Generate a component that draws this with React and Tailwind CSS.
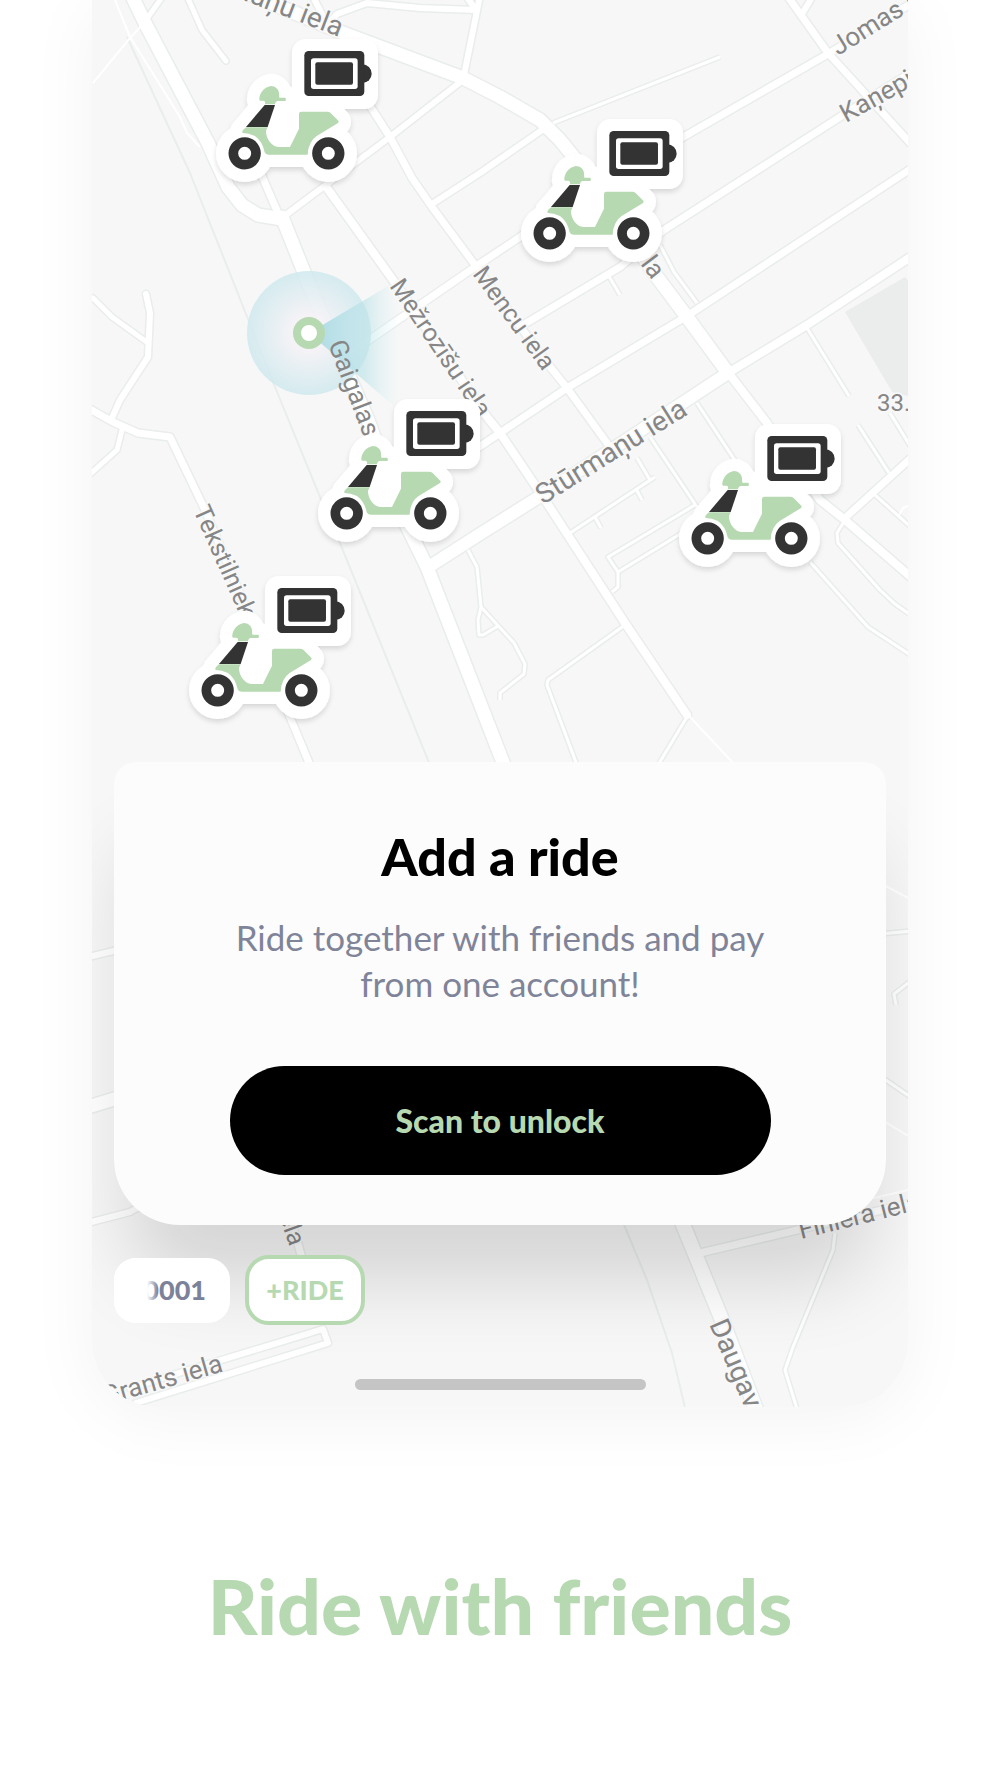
import React from 'react';

const ROADS = [
  { d: 'M93 298 L112 317 L148 343', w: 5 },
  { d: 'M146 294 L150 313 L148 357 L120 400 L112 418', w: 6 },
  { d: 'M122 430 L117 450 L88 476', w: 5 },
  { d: 'M88 408 L113 422 L138 433 L170 437 L205 510 L255 630 L290 717 L312 770', w: 7 },
  { d: 'M163 -4 L146 20', w: 5 },
  { d: 'M186 -6 L202 30 L226 61', w: 5 },
  { d: 'M312 -5 L325 20', w: 6 },
  { d: 'M328 24 L337 14 L367 3 L420 8 L476 10 L466 -4', w: 6 },
  { d: 'M480 -4 L464 75', w: 6 },
  { d: 'M255 160 L281 220', w: 7 },
  { d: 'M463 80 L390 137 L283 217', w: 6 },
  { d: 'M363 95 L390 137 L412 178 L432 207 L475 265 L547 363 L567 388 L607 443', w: 7 },
  { d: 'M327 188 L393 280 L487 417 L500 433 L547 503 L625 623 L687 715', w: 8 },
  { d: 'M432 204 L480 173 L545 128', w: 6 },
  { d: 'M350 353 L475 267 L523 235 L685 136 L828 54 L912 3', w: 7 },
  { d: 'M523 325 L620 267 L664 230 L843 115 L912 72', w: 7 },
  { d: 'M470 453 L500 433 L567 388 L687 316 L912 168', w: 7 },
  { d: 'M728 373 L807 325 L912 256', w: 8 },
  { d: 'M786 -6 L828 53 L912 145', w: 7 },
  { d: 'M814 -6 L802 14', w: 6 },
  { d: 'M730 375 L767 423 L820 500 L845 520 L912 578', w: 8 },
  { d: 'M912 457 L845 518', w: 7 },
  { d: 'M88 957 L160 940', w: 6 },
  { d: 'M88 1107 L160 1085', w: 13 },
  { d: 'M88 1223 L130 1212 L160 1195', w: 6 },
  { d: 'M282 1190 L302 1258', w: 7 },
  { d: 'M130 1388 L323 1329 L328 1343 L136 1403', w: 6 },
  { d: 'M700 1253 L797 1230 L912 1203', w: 7 },
  { d: 'M132 -4 L145 23 L208 143 L228 187 L242 205 L258 215 L282 219', w: 13 },
  { d: 'M282 217 L310 287 L368 420 L404 520 L427 567 L506 770', w: 13 },
  { d: 'M240 -10 L343 33 L463 78 L500 97 L540 120 L560 140 L577 161 L657 277 L687 317 L728 373', w: 13 },
  { d: 'M427 568 L480 534 L550 490 L728 373', w: 12 },
  { d: 'M675 1205 L722 1320 L757 1412', w: 14 },
];

const LANES = [
  'M553 123 L720 57',
  'M607 273 L620 295',
  'M660 245 L674 272 L697 303',
  'M807 328 L849 396',
  'M890 413 L912 449',
  'M858 425 L889 473',
  'M845 520 L837 533 L838 543 L880 590 L895 604 L912 616',
  'M875 495 L912 528',
  'M810 562 L868 627 L912 656',
  'M697 403 L740 468',
  'M650 437 L697 507',
  'M637 458 L650 480',
  'M695 505 L608 557 L618 572 L618 587 L612 592',
  'M695 525 L618 572',
  'M570 533 L655 477',
  'M595 517 L601 528',
  'M636 489 L642 500',
  'M625 625 L548 680 L547 685 L577 765',
  'M687 717 L658 765',
  'M468 550 L477 567 L481 607 L514 643 L525 664 L524 674 L500 693 L500 700',
  'M481 607 L478 620 L479 635 L483 635 L498 626',
  'M880 934 L912 931',
  'M896 1005 L894 994 L912 980',
  'M880 1076 L912 1098',
  'M835 1233 L833 1250 L793 1347 L785 1370 L798 1412',
];

const RAILS = [
  'M127 37 L190 173 L275 387 L320 497 L340 543 L430 765',
  'M620 1215 L647 1280 L672 1353 L686 1412',
];

const FOOTPATHS = [
  'M145 22 L130 38 L93 83',
  'M115 0 L130 37 L157 80 L180 117 L187 133 L200 147',
  'M690 717 L735 765',
  'M880 883 L912 900',
  'M880 1119 L912 1138',
  'M870 1199 L912 1189',
  'M898 517 L903 508 L912 504',
];

const LABELS = [
  { text: 'maņu iela', x: 339, y: 37, angle: 21, anchor: 'end', size: 28 },
  { text: 'Jomas iela', x: 838, y: 56, angle: -32, size: 26 },
  { text: 'Kaņepi', x: 846, y: 123, angle: -29, size: 26 },
  { text: 'la', x: 640, y: 264, angle: 53, size: 26 },
  { text: 'Mencu iela', x: 472, y: 274, angle: 54, size: 25 },
  { text: 'Mežrozīšu iela', x: 389, y: 286, angle: 56, size: 25 },
  { text: 'Gaigalas', x: 328, y: 344, angle: 69, size: 26 },
  { text: 'Stūrmaņu iela', x: 543, y: 505, angle: -32, size: 28 },
  { text: 'Tekstilnieku', x: 193, y: 510, angle: 66, size: 25 },
  { text: '33.', x: 877, y: 411, angle: 0, size: 24 },
  { text: 'iela', x: 290, y: 1247, angle: 70, anchor: 'end', size: 25 },
  { text: 'Finiera iela', x: 801, y: 1239, angle: -14, size: 26 },
  { text: 'Grants iela', x: 224, y: 1371, angle: -16, anchor: 'end', size: 26 },
  { text: 'Daugavas', x: 709, y: 1324, angle: 67, size: 28 },
];

const SCOOTERS = [
  { id: 1, x: 200, y: 30 },
  { id: 2, x: 505, y: 110 },
  { id: 3, x: 302, y: 390 },
  { id: 4, x: 663, y: 415 },
  { id: 5, x: 173, y: 567 },
];

const HELMET =
  'M178 205 C180 186 194 172 212 168 C226 168 237 178 237 190 L238 203 L256 203 Q260 208 256 213 L234 213 Q226 214 225 223 L195 223 Q197 213 190 212 L180 212 Q177 210 178 205 Z';
const SHIELD = 'M194 225 L225 225 L203 291 L138 291 Z';
const BODY =
  'M138 292 L203 292 L198 302 C197 325 215 350 235 351 L270 351 L297 296 L297 252 Q297 245 304 245 L382 245 Q387 245 391 248 L415 272 Q418 277 413 280 L350 318 Q325 335 323 374 L205 374 Q197 374 194 367 Q188 335 165 318 Q145 309 128 309 Q125 304 130 299 Z';

function ScooterPin({ x, y }) {
  return (
    <g transform={`translate(${x} ${y}) scale(0.3333)`}>
      <g filter="url(#pin-shadow)">
        <g fill="#fff" stroke="#fff" strokeWidth="74" strokeLinejoin="round">
          <path d={HELMET} />
          <path d={SHIELD} />
          <path d={BODY} />
          <path d="M195 220 L230 220 L300 250 L280 350 L200 350 Z" strokeWidth="0" />
          <circle cx="134" cy="370" r="49" />
          <circle cx="385" cy="370" r="49" />
        </g>
        <rect x="276" y="27" width="258" height="210" rx="42" fill="#fff" />
      </g>
      <path d={HELMET} fill="#b7d9b1" />
      <path d={SHIELD} fill="#333" />
      <path d={BODY} fill="#b7d9b1" />
      <circle cx="134" cy="370" r="34" fill="#fff" stroke="#333" strokeWidth="29" />
      <circle cx="385" cy="370" r="34" fill="#fff" stroke="#333" strokeWidth="29" />
      <circle cx="487" cy="131" r="28" fill="#333" />
      <rect x="313" y="63" width="180" height="135" rx="13" fill="#333" />
      <rect x="333" y="85" width="140" height="92" rx="8" fill="#fff" />
      <rect x="346" y="97" width="113" height="67" rx="6" fill="#333" />
    </g>
  );
}

function CityMap() {
  return (
    <svg viewBox="92 0 816 1407" className="block h-auto w-full" role="img" aria-label="Map">
      <defs>
        <radialGradient id="accuracy">
          <stop offset="0" stopColor="#f9f4f8" stopOpacity="0.9" />
          <stop offset="0.3" stopColor="#f4f2f6" stopOpacity="0.9" />
          <stop offset="1" stopColor="#cfe9ee" stopOpacity="0.85" />
        </radialGradient>
        <linearGradient id="heading" gradientUnits="userSpaceOnUse" x1="315" y1="0" x2="400" y2="0">
          <stop offset="0" stopColor="#a9dae4" stopOpacity="0.95" />
          <stop offset="0.6" stopColor="#b7e1e7" stopOpacity="0.55" />
          <stop offset="1" stopColor="#d9eff2" stopOpacity="0" />
        </linearGradient>
        <filter id="pin-shadow" x="-20%" y="-20%" width="140%" height="150%">
          <feDropShadow dx="0" dy="9" stdDeviation="8" floodColor="#000" floodOpacity="0.13" />
        </filter>
      </defs>
      <rect x="92" width="816" height="1407" fill="#f7f7f7" />
      <path d="M845 312 L905 277 L908 280 V396 L893 393 L885 380 Z" fill="#ebedec" />

      <g fill="none" stroke="#e9edec" strokeLinejoin="round">
        {RAILS.map((d) => (
          <path key={d} d={d} strokeWidth="2" />
        ))}
        {LANES.map((d) => (
          <path key={d} d={d} strokeWidth="6" />
        ))}
        {ROADS.map(({ d, w }) => (
          <path key={d} d={d} strokeWidth={w + 3} strokeLinecap="round" />
        ))}
      </g>
      <g fill="none" stroke="#fff" strokeLinejoin="round">
        {FOOTPATHS.map((d) => (
          <path key={d} d={d} strokeWidth="2" />
        ))}
        {LANES.map((d) => (
          <path key={d} d={d} strokeWidth="3" />
        ))}
        {ROADS.map(({ d, w }) => (
          <path key={d} d={d} strokeWidth={w} strokeLinecap="round" />
        ))}
      </g>

      {/* Current position: accuracy disc and view cone under the labels */}
      <circle cx="309" cy="333" r="62" fill="url(#accuracy)" />
      <path d="M309 333 L410 273 L410 420 Z" fill="url(#heading)" />

      <g
        className="font-['Roboto',sans-serif]"
        fill="#868686"
        stroke="#f9f9f9"
        strokeOpacity="0.7"
        strokeWidth="4"
        strokeLinejoin="round"
        paintOrder="stroke"
      >
        {LABELS.map(({ text, x, y, angle, anchor, size }) => (
          <text
            key={`${text}-${x}`}
            transform={`translate(${x} ${y}) rotate(${angle})`}
            textAnchor={anchor}
            fontSize={size}
            strokeWidth={text === 'Gaigalas' ? 0 : 4}
          >
            {text}
          </text>
        ))}
      </g>

      <circle cx="309" cy="333" r="12" fill="#fff" stroke="#b7d9b1" strokeWidth="8" />
      {SCOOTERS.map(({ id, x, y }) => (
        <ScooterPin key={id} x={x} y={y} />
      ))}
    </svg>
  );
}

function AddRideCard() {
  return (
    <section className="flex flex-col items-center rounded-t-[22px] rounded-b-[66px] bg-[#fcfcfc] px-12 pt-16 pb-[50px] text-center shadow-[0_72px_80px_-16px_rgba(0,0,0,0.14)]">
      <h2 className="text-[52px] leading-[60px] font-black text-black">Add a ride</h2>
      <p className="mt-7 max-w-[560px] text-[35px] leading-[46px] text-[#7f8499]">
        Ride together with friends and pay from one account!
      </p>
      <button className="mt-[60px] h-[109px] w-full max-w-[541px] rounded-full bg-black text-[32px] font-black text-[#b7d9b1]">
        Scan to unlock
      </button>
    </section>
  );
}

function RideTabs() {
  return (
    <div className="flex items-center gap-[15px]">
      <button className="relative h-[65px] w-[116px] overflow-hidden rounded-[22px] bg-white pr-6 text-right text-[27px] font-black text-[#7c8299]">
        0001
        <span className="absolute inset-y-0 left-0 w-11 bg-linear-to-r from-white from-75% to-white/0" />
      </button>
      <button className="h-[70px] w-[120px] rounded-3xl border-4 border-[#b7d9b1] bg-white text-[27px] font-black text-[#b7d9b1]">
        +RIDE
      </button>
    </div>
  );
}

export default function App() {
  return (
    <main className="min-h-screen overflow-hidden bg-white font-['Lato',sans-serif]">
      <div className="mx-auto grid w-[81.6%] overflow-hidden rounded-b-[66px] shadow-[0_10px_70px_rgba(0,0,0,0.05)]">
        <div className="col-start-1 row-start-1">
          <CityMap />
        </div>
        <div className="col-start-1 row-start-1 flex flex-col self-end px-[22px] pb-[17px]">
          <AddRideCard />
          <div className="mt-[30px]">
            <RideTabs />
          </div>
          <div className="mt-[54px] h-[11px] w-[291px] self-center rounded-full bg-[#c5c5c5]" />
        </div>
      </div>
      <h1 className="mt-[150px] text-center text-[77px] leading-[96px] font-black text-[#b7d9b1]">Ride with friends</h1>
    </main>
  );
}
